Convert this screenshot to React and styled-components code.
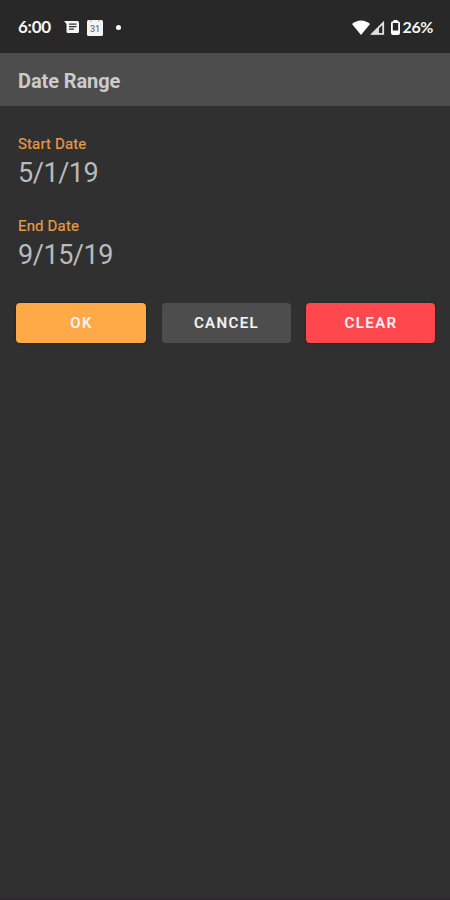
import styled, { createGlobalStyle } from "styled-components";

const GlobalStyle = createGlobalStyle`
  * {
    box-sizing: border-box;
  }
  body {
    margin: 0;
    background: #303030;
    font-family: Roboto, sans-serif;
  }
`;

const Screen = styled.div`
  width: 450px;
  height: 900px;
  display: flex;
  flex-direction: column;
  background: #303030;
  border-bottom: 2px solid #2e272c;
  overflow: hidden;
`;

const StatusBar = styled.div`
  height: 53px;
  flex-shrink: 0;
  display: flex;
  align-items: center;
  justify-content: space-between;
  padding: 1px 17px 0 18px;
  background: #282828;
  color: #f4f4f4;
`;

const StatusGroup = styled.div`
  display: flex;
  align-items: center;

  svg {
    display: block;
  }
`;

const Time = styled.span`
  width: 46px;
  font-family: Lato, sans-serif;
  font-size: 17px;
  font-weight: 700;
  line-height: 20px;
  letter-spacing: -0.3px;
`;

const Battery = styled.span`
  margin-left: 3px;
  font-family: Lato, sans-serif;
  font-size: 16px;
  font-weight: 700;
  line-height: 20px;
  letter-spacing: -0.4px;
`;

const Dot = styled.span`
  width: 5px;
  height: 5px;
  margin-left: 13px;
  border-radius: 50%;
  background: #fff;
`;

const Header = styled.header`
  height: 53px;
  flex-shrink: 0;
  display: flex;
  align-items: center;
  padding: 2px 18px 0;
  background: #4d4d4d;
`;

const Title = styled.h1`
  margin: 0;
  color: #cbcbcb;
  font-size: 20px;
  font-weight: 700;
  letter-spacing: -0.1px;
`;

const Form = styled.main`
  padding: 28px 16px 0;
`;

const Field = styled.div`
  height: 82px;
  padding-left: 2px;
`;

const Label = styled.div`
  color: #e59c45;
  font-size: 15px;
  line-height: 20px;
  letter-spacing: 0.15px;
  -webkit-text-stroke: 0.2px;
`;

const Value = styled.div`
  padding-top: 1px;
  color: #bababa;
  font-size: 27px;
  line-height: 36px;
  letter-spacing: -0.45px;
`;

const Buttons = styled.div`
  display: grid;
  grid-template-columns: 130px 129px 129px;
  column-gap: 15.5px;
  margin-top: 5px;
`;

const Button = styled.button`
  height: 40px;
  padding: 0 0 0 1px;
  border: 0;
  border-radius: 4px;
  background: ${(props) => props.$color};
  box-shadow: 0 0 2px ${(props) => props.$edge || "transparent"};
  color: #f3f3f3;
  font-family: inherit;
  font-size: 15px;
  font-weight: 500;
  letter-spacing: 1.4px;
  -webkit-text-stroke: 0.2px;
`;

const MessageIcon = () => (
  <svg width="15" height="14" viewBox="0 0 15 14">
    <path d="M0 1h13.5q1.5 0 1.5 1.5v9q0 1.5-1.5 1.5H4q-1.5 0-1.5-1.5V4z" fill="#f4f4f4" />
    <path d="M5 4.2h7.5M5 6.7h7.5M5 9.2h5" stroke="#333" strokeWidth="1.2" />
  </svg>
);

const CalendarSvg = styled.svg`
  margin-left: 8px;
`;

const CalendarIcon = () => (
  <CalendarSvg width="16" height="17" viewBox="0 0 16 17">
    <rect y="1" width="16" height="16" rx="1.5" fill="#f4f4f4" />
    <path d="M3 1h2v2H3zM11 1h2v2h-2z" fill="#cfcfcf" />
    <text
      x="8"
      y="12.5"
      textAnchor="middle"
      fontFamily="Roboto, sans-serif"
      fontSize="9"
      fontWeight="500"
      fill="#777"
    >
      31
    </text>
  </CalendarSvg>
);

const WifiIcon = () => (
  <svg width="18" height="15" viewBox="0 0 18 15">
    <path d="M0 4C5-.8 13-.8 18 4L9 15z" fill="#fff" />
  </svg>
);

const SignalIcon = () => (
  <svg width="15" height="15" viewBox="0 0 15 15">
    <path d="M2.2 13.8L13.2 2.8v11z" fill="none" stroke="#e2e2e2" strokeWidth="1.8" />
    <path d="M1 14.5L9 7v7.5z" fill="#ddd" />
  </svg>
);

const BatteryIcon = () => (
  <svg width="9" height="15" viewBox="0 0 9 15">
    <path d="M2.5 0h4v2h-4z" fill="#fff" />
    <rect x="0.9" y="2.2" width="7.2" height="11.9" rx="1" fill="none" stroke="#fff" strokeWidth="1.8" />
    <path d="M1 10.5h7V14H1z" fill="#fff" />
  </svg>
);

const StatusIcons = styled(StatusGroup)`
  svg:nth-of-type(3) {
    margin-left: 6px;
  }
`;

const App = () => {
  return (
    <>
      <GlobalStyle />
      <Screen>
        <StatusBar>
          <StatusGroup>
            <Time>6:00</Time>
            <MessageIcon />
            <CalendarIcon />
            <Dot />
          </StatusGroup>
          <StatusIcons>
            <WifiIcon />
            <SignalIcon />
            <BatteryIcon />
            <Battery>26%</Battery>
          </StatusIcons>
        </StatusBar>
        <Header>
          <Title>Date Range</Title>
        </Header>
        <Form>
          <Field>
            <Label>Start Date</Label>
            <Value>5/1/19</Value>
          </Field>
          <Field>
            <Label>End Date</Label>
            <Value>9/15/19</Value>
          </Field>
          <Buttons>
            <Button $color="#ffaa46" $edge="#07182a">OK</Button>
            <Button $color="#4d4d4d">CANCEL</Button>
            <Button $color="#ff484d" $edge="#0d2828">CLEAR</Button>
          </Buttons>
        </Form>
      </Screen>
    </>
  );
};

export default App;
